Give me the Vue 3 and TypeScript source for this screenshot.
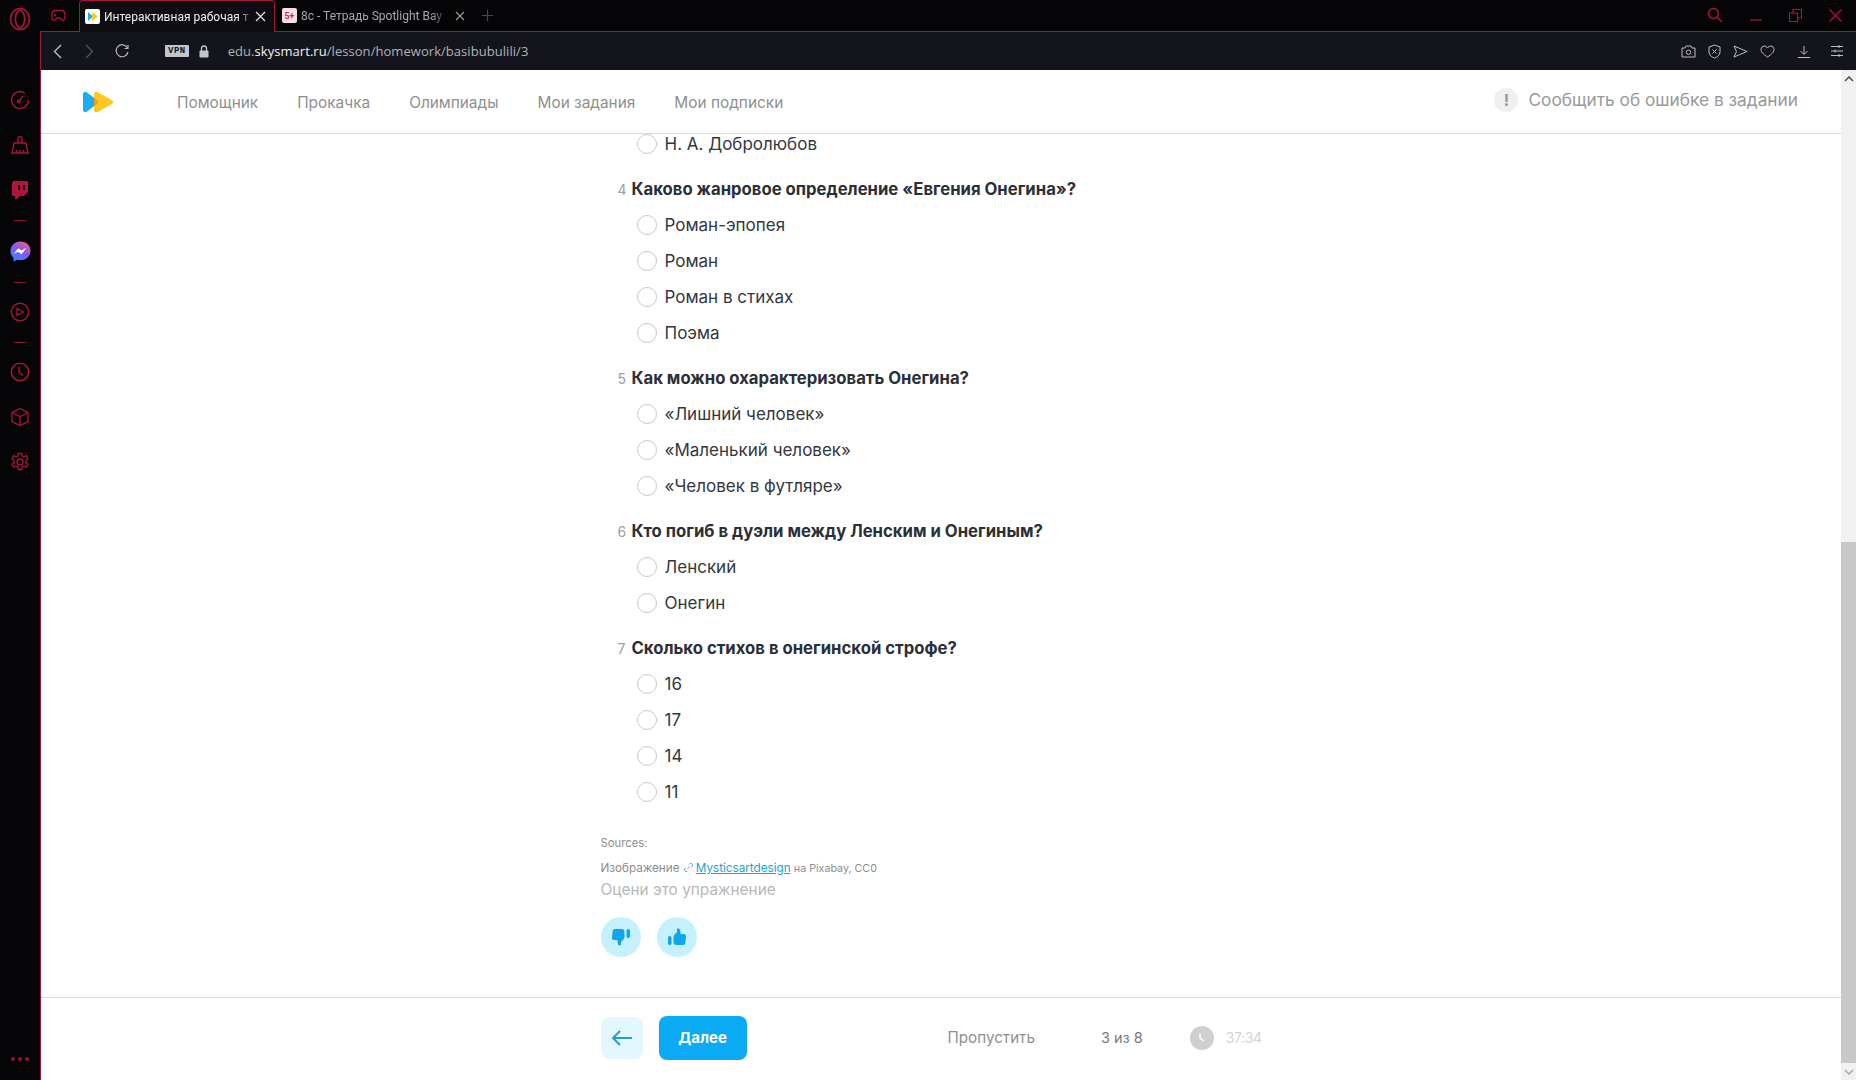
<template>
  <div class="browser">
    <aside class="sidebar">
      <div class="opera">
        <svg width="22" height="24" viewBox="0 0 22 24" fill="none" stroke="#b3143c" stroke-width="1.6">
          <ellipse cx="11" cy="12" rx="9.5" ry="10.5" />
          <ellipse cx="11" cy="12" rx="4.6" ry="8.6" />
        </svg>
      </div>
      <div class="side-item">
        <svg width="20" height="20" viewBox="0 0 20 20" fill="none" stroke="#a8153a" stroke-width="1.4">
          <path d="M15 3.2A8.5 8.5 0 1 0 18.5 10" />
          <path d="M9 11l4-5" />
          <circle cx="8.6" cy="11.4" r="1.2" />
          <path d="M18 6.5v.6" />
        </svg>
      </div>
      <div class="side-item">
        <svg width="18" height="20" viewBox="0 0 18 20" fill="none" stroke="#a8153a" stroke-width="1.4">
          <path d="M7 8V3.5a2 2 0 0 1 4 0V8" />
          <path d="M3 8h12l2 10H1z" />
          <path d="M5.500 18v-3M9 18v-3M12.500 18v-3" />
        </svg>
      </div>
      <div class="side-item">
        <svg width="18" height="20" viewBox="0 0 18 20">
          <path fill="#b3143c" d="M2 1h15v11l-4 4H9l-3 3H4v-3H1V4z" />
          <path fill="#050508" d="M7 5h2v5H7zM12 5h2v5h-2z" />
        </svg>
      </div>
      <div class="side-line"><span></span></div>
      <div class="side-item">
        <svg width="21" height="21" viewBox="0 0 21 21">
          <defs>
            <linearGradient id="msg" x1="0.2" y1="1" x2="0.8" y2="0">
              <stop offset="0" stop-color="#2f8cff" />
              <stop offset="0.55" stop-color="#8a55f5" />
              <stop offset="1" stop-color="#f2607a" />
            </linearGradient>
          </defs>
          <path fill="url(#msg)" d="M10.500 0.500C4.800 0.500 0.500 4.600 0.500 10c0 2.800 1.200 5.300 3.100 7v3.500l3.300-1.800c1.100 0.300 2.300 0.500 3.600 0.500 5.700 0 10-4.100 10-9.500S16.200 0.500 10.500 0.500z" />
          <path fill="#fff" d="M3.500 13l4.800-5.800 3.200 2.400 4-2.400.5.400-4.500 5.600-3.300-2.400z" />
        </svg>
      </div>
      <div class="side-line tight"><span></span></div>
      <div class="side-item">
        <svg width="20" height="20" viewBox="0 0 20 20" fill="none" stroke="#a8153a" stroke-width="1.4">
          <circle cx="10" cy="10" r="8.700" />
          <path d="M7 6.500l6.500 3.500L7 13.500z" stroke-linejoin="round" />
        </svg>
      </div>
      <div class="side-line short"><span></span></div>
      <div class="side-item tight-item">
        <svg width="20" height="20" viewBox="0 0 20 20" fill="none" stroke="#a8153a" stroke-width="1.5">
          <circle cx="10" cy="10" r="8.700" />
          <path d="M9 5v5l4 3.500" />
        </svg>
      </div>
      <div class="side-item">
        <svg width="20" height="20" viewBox="0 0 20 20" fill="none" stroke="#a8153a" stroke-width="1.3">
          <path d="M10 1.500l8 4v9l-8 4-8-4v-9z" />
          <path d="M2 5.500l8 4 8-4M10 9.500v9" />
        </svg>
      </div>
      <div class="side-item">
        <svg width="20" height="20" viewBox="0 0 20 20" fill="none" stroke="#a8153a" stroke-width="1.3">
          <path d="M8.300 1.500h3.400l.5 2.500 1.700.8 2.300-1.100 1.700 2.900-2 1.600v2.400l2 1.600-1.700 2.900-2.300-1.100-1.700.8-.5 2.700H8.300l-.5-2.700-1.700-.8-2.300 1.100-1.700-2.900 2-1.600V8.200l-2-1.600 1.700-2.900 2.300 1.100 1.700-.8z" />
          <circle cx="10" cy="10" r="3" />
        </svg>
      </div>
      <div class="side-dots"><i></i><i></i><i></i></div>
    </aside>

    <div class="window">
      <div class="tabstrip">
        <svg class="game" width="15" height="13" viewBox="0 0 15 13" fill="none" stroke="#a8153a" stroke-width="1.3">
          <path d="M4 1.500h7c2 0 3 1.500 3 5 0 3-.5 5-2 5-1.500 0-2-2.500-3.500-2.500h-2C5 9 4.500 11.500 3 11.500c-1.500 0-2-2-2-5 0-3.500 1-5 3-5z" />
          <path d="M4 5v2.500M2.800 6.200h2.400" />
        </svg>
        <div class="tab active">
          <span class="favicon white">
            <svg width="11" height="11" viewBox="0 0 11 11">
              <path fill="#18aef0" d="M1 1l5 4.500L1 10z" />
              <path fill="#ffc81e" d="M5 1l6 4.500L5 10z" />
            </svg>
          </span>
          <span class="tab-title">Интерактивная рабочая т</span>
          <svg width="11" height="11" viewBox="0 0 11 11" stroke="#e8e8e8" stroke-width="1.200">
            <path d="M1 1l9 9M10 1l-9 9" />
          </svg>
        </div>
        <div class="tab">
          <span class="favicon pink">5+</span>
          <span class="tab-title second">8с - Тетрадь Spotlight Bay</span>
          <svg width="10" height="10" viewBox="0 0 10 10" stroke="#9a9a9a" stroke-width="1.100">
            <path d="M1 1l8 8M9 1L1 9" />
          </svg>
        </div>
        <svg class="plus" width="11" height="11" viewBox="0 0 11 11" stroke="#b3143c" stroke-width="1.200">
          <path d="M5.500 0v11M0 5.500h11" />
        </svg>
        <div class="window-controls">
          <svg width="16" height="16" viewBox="0 0 16 16" fill="none" stroke="#b3143c" stroke-width="1.400">
            <circle cx="6.500" cy="6.500" r="5" />
            <path d="M10.200 10.200L15 15" />
          </svg>
          <svg width="12" height="12" viewBox="0 0 12 12" stroke="#b3143c" stroke-width="1.200">
            <path d="M0 11h12" />
          </svg>
          <svg width="13" height="13" viewBox="0 0 13 13" fill="none" stroke="#b3143c" stroke-width="1.100">
            <path d="M.5 4h8v8.500h-8zM4 4V.5h8.500V9H8.500" />
          </svg>
          <svg width="13" height="13" viewBox="0 0 13 13" stroke="#b3143c" stroke-width="1.200">
            <path d="M.5.500l12 12M12.500.500l-12 12" />
          </svg>
        </div>
      </div>

      <div class="toolbar">
        <svg class="t-back" width="9" height="15" viewBox="0 0 9 15" fill="none" stroke="#c4c4c8" stroke-width="1.300">
          <path d="M8 1L1.500 7.500 8 14" />
        </svg>
        <svg class="t-forward" width="9" height="15" viewBox="0 0 9 15" fill="none" stroke="#55555c" stroke-width="1.300">
          <path d="M1 1l6.500 6.500L1 14" />
        </svg>
        <svg class="t-reload" width="14" height="14" viewBox="0 0 14 14" fill="none" stroke="#b8b8bc" stroke-width="1.200">
          <path d="M12.500 4A6 6 0 1 0 13 8" />
          <path d="M13 1v3.500H9.500" />
        </svg>
        <span class="vpn">VPN</span>
        <svg class="lock" width="10" height="13" viewBox="0 0 10 13">
          <path fill="none" stroke="#c4c4cc" stroke-width="1.300" d="M2.500 6V3.500a2.500 2.500 0 0 1 5 0V6" />
          <rect x="0.500" y="5.500" width="9" height="7" rx="1" fill="#c4c4cc" />
        </svg>
        <span class="url">edu.<b>skysmart.ru</b>/lesson/homework/basibubulili/3</span>
        <div class="toolbar-right">
          <svg width="15" height="13" viewBox="0 0 15 13" fill="none" stroke="#bdbdc2" stroke-width="1">
            <path d="M1 3h3l1-2h5l1 2h3v9H1z" />
            <circle cx="7.500" cy="7.300" r="2.200" />
          </svg>
          <svg width="13" height="15" viewBox="0 0 13 15" fill="none" stroke="#bdbdc2" stroke-width="1">
            <path d="M6.500 1l5.500 2v5c0 3-2.500 5-5.500 6C3.500 13 1 11 1 8V3z" />
            <path d="M4.500 5.500l4 4M8.500 5.500l-4 4" />
          </svg>
          <svg width="15" height="13" viewBox="0 0 15 13" fill="none" stroke="#bdbdc2" stroke-width="1">
            <path d="M1 1l13 5.500L1 12l2.500-5.500z" />
          </svg>
          <svg width="15" height="13" viewBox="0 0 15 13" fill="none" stroke="#bdbdc2" stroke-width="1">
            <path d="M7.500 12C3 9 1 7 1 4.500 1 2.500 2.500 1 4.200 1c1.400 0 2.600.8 3.300 2 .7-1.200 1.900-2 3.300-2C12.500 1 14 2.500 14 4.500 14 7 12 9 7.500 12z" />
          </svg>
          <svg class="t-down" width="14" height="13" viewBox="0 0 14 13" fill="none" stroke="#bdbdc2" stroke-width="1">
            <path d="M7 1v8M3.500 6L7 9.500 10.500 6M1 12.500h12" />
          </svg>
          <svg class="t-menu" width="14" height="12" viewBox="0 0 14 12" fill="none" stroke="#bdbdc2" stroke-width="1">
            <path d="M1 1.500h12M1 6h12M1 10.500h12M9 0v3M5 4.500v3M9 9v3" />
          </svg>
        </div>
      </div>

      <div class="viewport">
        <div class="page">
          <header class="page-header">
            <svg class="logo" width="32" height="22" viewBox="0 0 32 22">
              <path fill="#18aef0" d="M1 3.500C1 1 3.200 0 5 1.400L15 9c1.400 1.100 1.400 3 0 4.100L5 20.600C3.200 22 1 21 1 18.500z" />
              <path fill="#ffc81e" d="M12 3c0-2 2-3 3.800-1.800L30 9.200c1.600 1 1.600 2.700 0 3.700l-14.200 8c-1.800 1.100-3.800.1-3.800-1.900z" />
              <path fill="#f79a1e" d="M12 6.500L15 9c1.400 1.100 1.400 3 0 4.100L12 15.500z" />
            </svg>
            <nav class="nav">
              <a v-for="link in links" :key="link">{{ link }}</a>
            </nav>
            <div class="report">
              <span class="report-icon">!</span>
              Сообщить об ошибке в задании
            </div>
          </header>

          <div class="scroll">
            <section class="exercise">
              <div class="option first">
                <span class="radio"></span>
                Н. А. Добролюбов
              </div>
              <div v-for="q in questions" :key="q.num" class="question">
                <div class="q-title">
                  <span class="q-num">{{ q.num }}</span>
                  {{ q.text }}
                </div>
                <div v-for="opt in q.options" :key="opt" class="option">
                  <span class="radio"></span>
                  {{ opt }}
                </div>
              </div>

              <p class="sources">Sources:</p>
              <p class="credit">
                Изображение
                <svg width="11" height="11" viewBox="0 0 11 11" fill="none" stroke="#6fa9c4" stroke-width="1">
                  <path d="M4.500 6.500l2-2M6 2.500l1-1a2 2 0 0 1 2.500 2.500l-1.500 1.500M5 8.500l-1 1A2 2 0 0 1 1.500 7L3 5.500" />
                </svg>
                <a>Mysticsartdesign</a> <span class="credit-tail">на Pixabay, CC0</span>
              </p>
              <p class="rate">Оцени это упражнение</p>
              <div class="thumbs">
                <button class="thumb">
                  <svg width="20" height="20" viewBox="0 0 20 20" fill="#0fa7ec">
                    <rect x="15.500" y="2" width="3.500" height="9" rx="1.700" />
                    <path d="M3.500 2h7c2 0 3 1 3 3v5c0 1-.5 1.800-1.200 2.500L10 15v2.500c0 1.500-2.500 1.500-3-.5l-.7-4H3C1.500 13 .8 11.800 1 10.500l.7-6.500C1.900 2.800 2.500 2 3.500 2z" />
                  </svg>
                </button>
                <button class="thumb">
                  <svg width="20" height="20" viewBox="0 0 20 20" fill="#0fa7ec">
                    <rect x="1" y="9" width="3.500" height="9" rx="1.700" />
                    <path d="M16.500 18h-7c-2 0-3-1-3-3v-5c0-1 .5-1.800 1.200-2.500L10 5V2.500c0-1.500 2.500-1.500 3 .5l.7 4H17c1.500 0 2.200 1.200 2 2.500l-.7 6.500c-.2 1.200-.8 2-1.800 2z" />
                  </svg>
                </button>
              </div>
            </section>
          </div>

          <footer class="page-footer">
            <div class="footer-inner">
              <button class="back">
                <svg width="22" height="16" viewBox="0 0 22 16" fill="none" stroke="#2a9ec9" stroke-width="2">
                  <path d="M21 8H2M9 1L2 8l7 7" />
                </svg>
              </button>
              <button class="next">Далее</button>
              <span class="skip">Пропустить</span>
              <span class="progress">3 из 8</span>
              <span class="clock">
                <svg width="13" height="13" viewBox="0 0 13 13" fill="none" stroke="#fff" stroke-width="1.500">
                  <path d="M5 2.500V7l4 3" />
                </svg>
              </span>
              <span class="time">37:34</span>
            </div>
          </footer>
        </div>

        <div class="scrollbar">
          <div class="sb-btn">
            <svg width="10" height="6" viewBox="0 0 10 6" fill="none" stroke="#555" stroke-width="1.600">
              <path d="M1 5l4-4 4 4" />
            </svg>
          </div>
          <div class="sb-track"></div>
          <div class="sb-thumb"></div>
          <div class="sb-btn down">
            <svg width="10" height="6" viewBox="0 0 10 6" fill="none" stroke="#aaa" stroke-width="1.600">
              <path d="M1 1l4 4 4-4" />
            </svg>
          </div>
        </div>
      </div>
    </div>
  </div>
</template>

<script setup lang="ts">
interface Question {
  num: number
  text: string
  options: string[]
}

const links = ['Помощник', 'Прокачка', 'Олимпиады', 'Мои задания', 'Мои подписки']

const questions: Question[] = [
  {
    num: 4,
    text: 'Каково жанровое определение «Евгения Онегина»?',
    options: ['Роман-эпопея', 'Роман', 'Роман в стихах', 'Поэма']
  },
  {
    num: 5,
    text: 'Как можно охарактеризовать Онегина?',
    options: ['«Лишний человек»', '«Маленький человек»', '«Человек в футляре»']
  },
  {
    num: 6,
    text: 'Кто погиб в дуэли между Ленским и Онегиным?',
    options: ['Ленский', 'Онегин']
  },
  {
    num: 7,
    text: 'Сколько стихов в онегинской строфе?',
    options: ['16', '17', '14', '11']
  }
]
</script>

<style>
html,
body {
  margin: 0;
  overflow: hidden;
}
</style>

<style scoped>
.browser {
  display: flex;
  width: 100%;
  height: 100vh;
  background: #050508;
  font-family: Inter, "Noto Sans", sans-serif;
  overflow: hidden;
}

.sidebar {
  width: 40px;
  flex: none;
  display: flex;
  flex-direction: column;
  align-items: center;
}

.opera {
  height: 38px;
  margin-bottom: 39px;
  display: flex;
  align-items: center;
  justify-content: center;
  width: 100%;
}

.side-item {
  height: 45px;
  display: flex;
  align-items: center;
  justify-content: center;
}

.side-item.tight-item {
  height: 44px;
}

.side-line {
  height: 17px;
  display: flex;
  align-items: center;
}

.side-line.tight {
  margin-bottom: -2px;
}

.side-line.short {
  height: 16px;
}

.side-line span {
  display: block;
  width: 12px;
  height: 1px;
  background: #8f1435;
}

.side-dots {
  margin-top: auto;
  margin-bottom: 19px;
  display: flex;
  gap: 3px;
}

.side-dots i {
  width: 4px;
  height: 4px;
  border-radius: 50%;
  background: #8f1435;
}

.window {
  flex: 1;
  min-width: 0;
  display: flex;
  flex-direction: column;
}

.tabstrip {
  height: 31px;
  flex: none;
  display: flex;
  align-items: flex-start;
  position: relative;
  z-index: 1;
}

.game {
  margin: 9px 13px 0 11px;
}

.tab {
  height: 31px;
  display: flex;
  align-items: center;
  color: #a8a8ac;
  font-family: Roboto, sans-serif;
  font-size: 12px;
}

.tab.active {
  width: 196px;
  box-sizing: border-box;
  padding: 0 8px 0 5px;
  height: 32px;
  margin-bottom: -1px;
  background: #0d0d12;
  border: 1px solid #a8153a;
  border-bottom: none;
  border-radius: 4px 4px 0 0;
  color: #f0f0f0;
}

.tab:not(.active) {
  width: 190px;
  padding-left: 7px;
  box-sizing: border-box;
}

.favicon {
  width: 15px;
  height: 15px;
  flex: none;
  border-radius: 2px;
  display: flex;
  align-items: center;
  justify-content: center;
  margin-right: 4px;
}

.favicon.white {
  background: #fff;
}

.favicon.pink {
  background: #f4dfe2;
  color: #c9334b;
  font-size: 9px;
  font-weight: 700;
}

.tab-title {
  flex: 1;
  min-width: 0;
  white-space: nowrap;
  overflow: hidden;
  -webkit-mask-image: linear-gradient(90deg, #000 88%, transparent);
  mask-image: linear-gradient(90deg, #000 88%, transparent);
}

.tab-title.second {
  margin-right: 6px;
}

.plus {
  margin: 10px 0 0 17px;
}

.window-controls {
  margin-left: auto;
  display: flex;
  align-items: center;
  gap: 27px;
  padding: 7px 14px 0 0;
}

.toolbar {
  height: 39px;
  box-sizing: border-box;
  flex: none;
  display: flex;
  align-items: center;
  background: #14151c;
  border-top: 1px solid #a8153a;
  border-left: 1px solid #a8153a;
  padding-left: 12px;
}

.t-forward {
  margin-left: 23px;
}

.t-reload {
  margin-left: 21px;
}

.vpn {
  margin-left: 36px;
  background: #c4c4cc;
  color: #14151c;
  font-family: "Liberation Mono", monospace;
  font-size: 9px;
  font-weight: 700;
  letter-spacing: 0.5px;
  padding: 1px 3px;
  border-radius: 1px;
}

.lock {
  margin-left: 10px;
}

.url {
  margin-left: 19px;
  font-family: "Open Sans", sans-serif;
  font-size: 13px;
  letter-spacing: 0.05px;
  color: #b2b2b8;
}

.url b {
  font-weight: 400;
  color: #f2f2f2;
}

.toolbar-right {
  margin-left: auto;
  display: flex;
  align-items: center;
  gap: 12px;
  padding-right: 12px;
}

.t-down {
  margin-left: 10px;
}

.t-menu {
  margin-left: 7px;
}

.viewport {
  flex: 1;
  min-height: 0;
  display: flex;
  background: #fff;
  border-left: 1px solid #a8153a;
}

.page {
  flex: 1;
  min-width: 0;
  display: flex;
  flex-direction: column;
}

.page-header {
  height: 64px;
  box-sizing: border-box;
  flex: none;
  display: flex;
  align-items: center;
  border-bottom: 1px solid #dcdcdc;
  padding: 0 43px 0 41px;
}

.nav {
  display: flex;
  gap: 39px;
  margin-left: 63px;
  padding-top: 2px;
}

.nav a {
  font-size: 15.400px;
  color: #8f8f8f;
}

.report {
  margin-left: auto;
  display: flex;
  align-items: center;
  gap: 10px;
  padding-bottom: 4px;
  font-size: 17.3px;
  color: #999;
}

.report-icon {
  width: 24px;
  height: 24px;
  border-radius: 50%;
  background: #f0f0f0;
  display: flex;
  align-items: center;
  justify-content: center;
  font-weight: 700;
  font-size: 16px;
  color: #999;
}

.scroll {
  flex: 1;
  min-height: 0;
  overflow: hidden;
}

.exercise {
  width: 681px;
  margin: -8px auto 0;
}

.question {
  padding-top: 9px;
}

.q-title {
  display: flex;
  align-items: center;
  gap: 5px;
  height: 36px;
  padding-left: 17px;
  font-size: 16.7px;
  font-weight: 700;
  color: #2b2f36;
}

.q-num {
  width: 9px;
  font-size: 14px;
  font-weight: 400;
  color: #a0a0a0;
}

.option {
  display: flex;
  align-items: center;
  gap: 8px;
  height: 36px;
  padding-left: 36px;
  font-size: 17px;
  color: #33363d;
}

.radio {
  width: 18px;
  height: 18px;
  flex: none;
  border: 1px solid #c8c8c8;
  border-radius: 50%;
}

.sources {
  margin: 21px 0 0;
  height: 24px;
  line-height: 24px;
  font-size: 11.3px;
  color: #8c8c8c;
}

.credit {
  margin: 1px 0 0;
  height: 24px;
  line-height: 24px;
  font-size: 11.7px;
  color: #8c8c8c;
}

.credit svg {
  vertical-align: -1px;
  margin-right: 2px;
}

.credit a {
  color: #1aa5d8;
  text-decoration: underline;
}

.credit-tail {
  font-size: 10.7px;
}

.rate {
  margin: 0;
  height: 20px;
  line-height: 20px;
  font-size: 15.4px;
  color: #b8b8b8;
}

.thumbs {
  display: flex;
  gap: 16px;
  margin-top: 17px;
}

.thumb {
  width: 40px;
  height: 40px;
  border: none;
  padding: 0;
  border-radius: 50%;
  background: #c5f0fd;
  display: flex;
  align-items: center;
  justify-content: center;
}

.page-footer {
  height: 83px;
  box-sizing: border-box;
  flex: none;
  border-top: 1px solid #dcdcdc;
  padding-bottom: 3px;
  display: flex;
  align-items: center;
}

.footer-inner {
  width: 681px;
  margin: 0 auto;
  display: flex;
  align-items: center;
}

.back {
  width: 42px;
  height: 42px;
  border: none;
  border-radius: 8px;
  background: #e2f8fe;
  display: flex;
  align-items: center;
  justify-content: center;
  padding: 0;
}

.next {
  width: 88px;
  height: 44px;
  margin-left: 16px;
  border: none;
  border-radius: 8px;
  background: #0aaaf5;
  color: #fff;
  font-family: inherit;
  font-size: 15px;
  font-weight: 700;
}

.skip {
  margin-left: 201px;
  font-size: 15.200px;
  color: #8f8f8f;
}

.progress {
  margin-left: 66px;
  font-size: 14.500px;
  color: #777;
}

.clock {
  width: 24px;
  height: 24px;
  margin-left: 47px;
  border-radius: 50%;
  background: #cfcfcf;
  display: flex;
  align-items: center;
  justify-content: center;
}

.time {
  margin-left: 12px;
  font-size: 14px;
  letter-spacing: -0.4px;
  color: #d4d4d4;
}

.scrollbar {
  width: 15px;
  flex: none;
  display: flex;
  flex-direction: column;
  background: #f1f1f1;
}

.sb-btn {
  height: 17px;
  flex: none;
  display: flex;
  align-items: center;
  justify-content: center;
}

.sb-track {
  height: 455px;
  flex: none;
}

.sb-thumb {
  flex: 1;
  background: #c8c8c8;
}
</style>
